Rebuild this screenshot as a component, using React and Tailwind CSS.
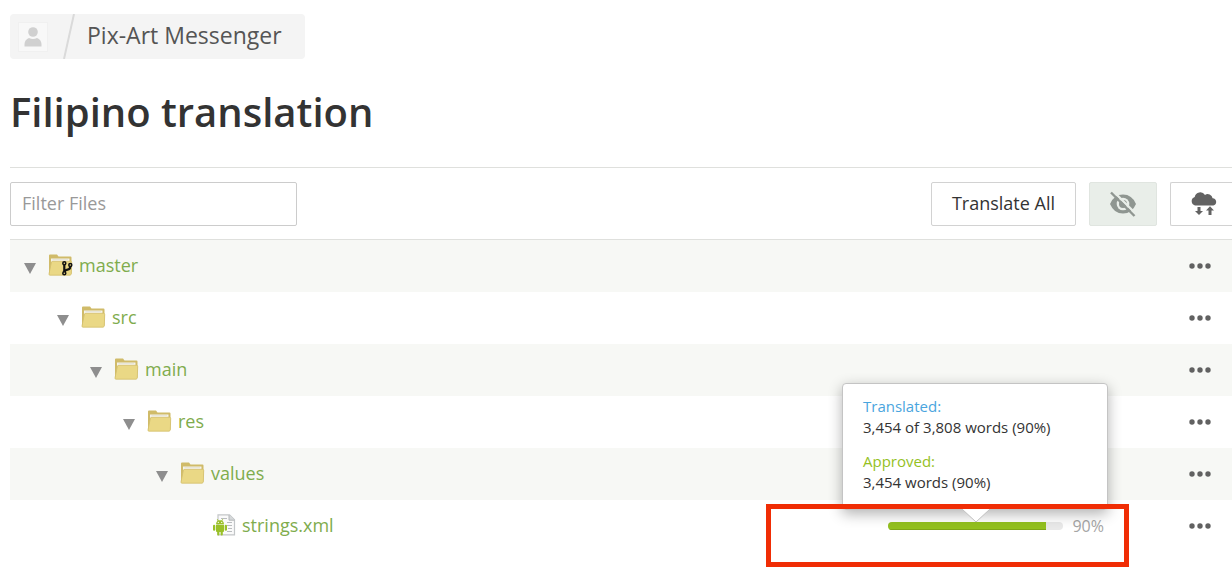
import React from "react"
import { clsx } from "clsx"

const INDENT = 33

const FILES = [
  { name: "master", type: "branch" },
  { name: "src", type: "folder" },
  { name: "main", type: "folder" },
  { name: "res", type: "folder" },
  { name: "values", type: "folder" },
  { name: "strings.xml", type: "android", progress: 90 },
]

function FolderIcon({ branch }) {
  return (
    <svg width="25" height="22" viewBox="0 0 25 22" aria-hidden="true">
      <path d="M1 20V1.500Q1 .5 2 .5H9L10.500 2.500H22.500Q23.500 2.500 23.500 3.500V20Z" fill="#d0bb69" />
      <path d="M3 8V4.500H21.500V8Z" fill="#f5f3ea" />
      <path d="M4.500 5.500H20" stroke="#dedbcd" strokeWidth=".6" />
      <path d="M3.300 8.500Q3.500 7.300 4.800 7.300H22.500Q23.800 7.300 23.700 8.500L23.300 19.500Q23.200 21.200 22 21.200H2Q.8 21.200 1 20Z" fill="#ead885" stroke="#d3bf6c" strokeWidth=".8" />
      {branch && (
        <g fill="none" stroke="#111" strokeWidth="1.500">
          <path d="M16.300 10.500V18" strokeWidth="2.200" />
          <path d="M22.200 12.500Q22.300 15.300 19.500 15.600Q16.800 16 16.500 18" strokeWidth="2.200" />
          <circle cx="16.300" cy="9.300" r="1.500" fill="#ead885" />
          <circle cx="22.300" cy="11" r="1.500" fill="#ead885" />
          <circle cx="16.300" cy="19.300" r="1.500" fill="#ead885" />
        </g>
      )}
    </svg>
  )
}

function AndroidFileIcon() {
  return (
    <svg width="23" height="22" viewBox="0 0 23 22" aria-hidden="true">
      <path d="M5 .8H16.500L21.500 5.800V20.800H5Z" fill="#fafafa" stroke="#c3c6c8" strokeWidth="1.200" />
      <path d="M16 1V6.200H21.500" fill="#d5d8da" stroke="#b5b8ba" />
      <path d="M8 4.500H14M14 8.500H19M14 11.500H19M15 14.500H19M14 17.500H19" stroke="#b9bcbe" strokeWidth="1.200" />
      <g fill="#9ac128">
        <path d="M3 10.200Q3.200 6.200 7 6.200Q10.800 6.200 11 10.200Z" />
        <path d="M4.300 5.300L5.500 7.200M9.700 5.300L8.500 7.200" stroke="#9ac128" strokeWidth="1" />
        <path d="M3 10.800H11V17Q11 18 10 18H4Q3 18 3 17Z" />
        <rect x="0" y="10.800" width="2.300" height="6" rx="1.100" />
        <rect x="11.700" y="10.800" width="2.300" height="6" rx="1.100" />
        <rect x="4.200" y="16" width="2.200" height="5.600" rx="1" />
        <rect x="7.600" y="16" width="2.200" height="5.600" rx="1" />
      </g>
      <circle cx="5.300" cy="8.400" r=".6" fill="#fff" />
      <circle cx="8.700" cy="8.400" r=".6" fill="#fff" />
    </svg>
  )
}

function HiddenIcon() {
  return (
    <svg width="28" height="28" viewBox="0 0 28 28" aria-hidden="true">
      <path d="M1 14Q5 4.500 14 4.500Q23 4.500 27 14Q23 23.500 14 23.500Q5 23.500 1 14Z" fill="#8f9691" />
      <circle cx="14" cy="14" r="6.300" fill="#e9eee9" />
      <circle cx="14" cy="14" r="4" fill="#8f9691" />
      <path d="M4.500 1.500L27 24" stroke="#e9eee9" strokeWidth="2.400" />
      <path d="M2 2.500L25.500 26" stroke="#8f9691" strokeWidth="2.400" />
    </svg>
  )
}

function CloudSyncIcon() {
  return (
    <svg width="28" height="24" viewBox="0 0 28 24" fill="#626262" aria-hidden="true">
      <path d="M5 13.500A4.500 4.500 0 0 1 4.700 4.900A5.700 5.700 0 0 1 15 2.900A5 5 0 0 1 22.600 6.200A3.700 3.700 0 0 1 23.300 13.500Z" />
      <path d="M7.500 15H10.500V19H13L9 23L5 19H7.500Z" />
      <path d="M18.500 23H21.500V18.500H24L20 14.300L16 18.500H18.500Z" />
    </svg>
  )
}

function Breadcrumb() {
  return (
    <nav className="flex h-[45px] w-[295px] items-center rounded-sm bg-[#f4f4f4]">
      <a href="#owner" aria-label="Owner" className="ml-2 flex size-[30px] items-center justify-center border border-[#f0f0f0] bg-[#f8f8f8]">
        <svg width="18" height="20" viewBox="0 0 18 20" fill="#d0d0d0" aria-hidden="true">
          <circle cx="9" cy="5" r="4.800" />
          <path d="M.5 19.500V17Q.8 12.500 5 11Q9 13 13 11Q17.200 12.500 17.500 17V19.500Z" />
        </svg>
      </a>
      <svg className="ml-3.5" width="14" height="45" viewBox="0 0 14 45" aria-hidden="true">
        <path d="M2 45L12 0" stroke="#dadada" strokeWidth="2" />
      </svg>
      <a href="#project" className="ml-[11px] pb-0.5 whitespace-nowrap text-[23px] text-[#555]">Pix-Art Messenger</a>
    </nav>
  )
}

function ProgressTooltip() {
  return (
    <div role="tooltip" className="absolute bottom-7 -left-[46px] w-[266px] rounded-sm border border-[#c4c4c4] bg-white px-5 pt-3 pb-4 text-[15px] leading-[21px] text-[#333] shadow-[0_4px_14px_rgba(0,0,0,0.3)]">
      <p className="text-[#4aa5de]">Translated:</p>
      <p>3,454 of 3,808 words (90%)</p>
      <p className="mt-[13px] text-[#95c11f]">Approved:</p>
      <p>3,454 words (90%)</p>
      <svg className="absolute top-full left-[119px]" width="28" height="14" viewBox="0 0 28 14" aria-hidden="true">
        <path d="M0 0L14 13L28 0" fill="#fff" stroke="#c0c0c0" />
      </svg>
    </div>
  )
}

function Progress({ value }) {
  return (
    <div className="relative mr-20 flex w-[216px] items-center justify-between">
      <div className="h-2 w-[175px] overflow-hidden rounded-sm bg-[#e9e9e9]">
        <div className="h-full border-b border-[#7fa518] bg-[#93c01f]" style={{ width: `${value}%` }} />
      </div>
      <span className="text-base text-[#a5a5a5]">{value}%</span>
      <ProgressTooltip />
      <div className="absolute -top-2.5 -right-[25px] -left-[122px] h-[63px] border-5 border-[#f02d05]" />
    </div>
  )
}

function FileRow({ file, depth }) {
  const isFile = file.type === "android"

  return (
    <li className={clsx("flex h-[52px] items-center pr-4", depth % 2 === 0 && "bg-[#f7f8f5]")}>
      <div className="flex items-center" style={{ paddingLeft: depth * INDENT }}>
        {isFile ? (
          <span className="w-[38px]" />
        ) : (
          <button type="button" aria-label={`Collapse ${file.name}`} className="mr-3 ml-3.5 w-3 pt-1">
            <svg width="12" height="11" viewBox="0 0 12 11" aria-hidden="true">
              <path d="M0 0H12L6 11Z" fill="#8e8e8e" />
            </svg>
          </button>
        )}
        <a href={`#${file.name}`} className="flex items-center gap-1.5 pb-0.5 text-lg text-[#7fac4d]">
          {isFile ? <AndroidFileIcon /> : <FolderIcon branch={file.type === "branch"} />}
          {file.name}
        </a>
      </div>
      <div className="ml-auto flex items-center">
        {file.progress && <Progress value={file.progress} />}
        <button type="button" aria-label={`Options for ${file.name}`} className="flex w-8 justify-center">
          <svg width="22" height="6" viewBox="0 0 22 6" fill="#616161" aria-hidden="true">
            <circle cx="3" cy="3" r="2.700" />
            <circle cx="11" cy="3" r="2.700" />
            <circle cx="19" cy="3" r="2.700" />
          </svg>
        </button>
      </div>
    </li>
  )
}

export default function App() {
  return (
    <main className="min-h-screen bg-white pt-3.5 pl-2.5 font-['Open_Sans','Noto_Sans',sans-serif]">
      <Breadcrumb />
      <h1 className="mt-[23px] text-[40px] leading-[60px] font-semibold text-[#333]">Filipino translation</h1>

      <div className="mt-[25px] flex items-center gap-[13px] border-t border-[#dfe0dd] pt-3.5 pb-[13px]">
        <input
          type="text"
          aria-label="Filter Files"
          placeholder="Filter Files"
          className="h-[44px] w-[287px] rounded-xs border border-[#ccc] px-[11px] pb-0.5 text-lg placeholder:text-[#999]"
        />
        <button type="button" className="ml-auto h-[44px] rounded-xs border border-[#d2d2d2] px-5 pb-0.5 text-lg text-[#333]">
          Translate All
        </button>
        <button type="button" aria-label="Toggle hidden files" className="flex h-[44px] w-[68px] items-center justify-center rounded-xs border border-[#e0e5e0] bg-[#e9eee9]">
          <HiddenIcon />
        </button>
        <button type="button" aria-label="Sync files" className="flex h-[44px] w-[62px] items-center rounded-l-xs border border-r-0 border-[#d2d2d2] pl-[19px]">
          <CloudSyncIcon />
        </button>
      </div>

      <ul className="border-t border-[#dfe0dd]">
        {FILES.map((file, i) => (
          <FileRow key={file.name} file={file} depth={i} />
        ))}
      </ul>
    </main>
  )
}
